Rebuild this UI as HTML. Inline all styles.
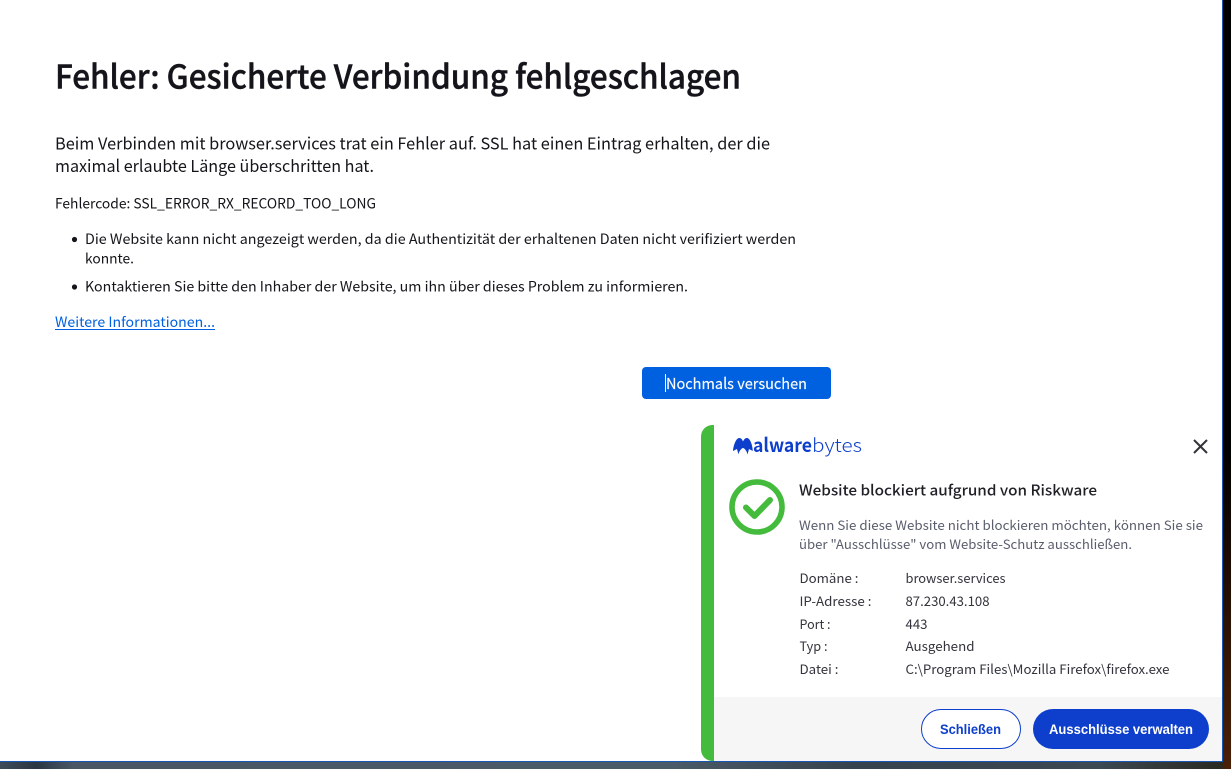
<!DOCTYPE html>
<html lang="de">
<head>
<meta charset="utf-8">
<title>Fehler: Gesicherte Verbindung fehlgeschlagen</title>
<style>
html,body{margin:0;padding:0;width:1231px;height:769px;overflow:hidden;background:#000}
svg{display:block;position:absolute;left:0;top:0}
text{font-family:"Noto Sans CJK JP","Liberation Sans",sans-serif;white-space:pre}
.b{font-family:"Liberation Sans",sans-serif}
</style>
</head>
<body>
<svg width="1231" height="769" viewBox="0 0 1231 769" xmlns="http://www.w3.org/2000/svg">
<defs>
<linearGradient id="strip" x1="0" y1="0" x2="0" y2="1">
<stop offset="0" stop-color="#000"/>
<stop offset=".58" stop-color="#000"/>
<stop offset=".72" stop-color="#1a0a02"/>
<stop offset=".9" stop-color="#3c1a06"/>
<stop offset="1" stop-color="#4a2008"/>
</linearGradient>
<linearGradient id="desk" x1="0" y1="0" x2="1" y2="0">
<stop offset="0" stop-color="#3f4d5a"/>
<stop offset=".03" stop-color="#2c3642"/>
<stop offset=".06" stop-color="#4a5866"/>
<stop offset=".55" stop-color="#4b5a68"/>
<stop offset=".7" stop-color="#36424d"/>
<stop offset=".9" stop-color="#3c4852"/>
<stop offset="1" stop-color="#2a2a20"/>
</linearGradient>
</defs>
<rect x="0" y="0" width="1231" height="769" fill="#000"/>
<rect x="1223" y="0" width="8" height="769" fill="url(#strip)"/>
<rect x="0" y="762" width="1223" height="7" fill="url(#desk)"/>
<rect x="0" y="0" width="1223" height="762" fill="#1c56b4"/>
<rect x="0" y="0" width="1222" height="761" fill="#fff"/>

<text x="55" y="88.500" font-size="32.5" font-weight="500" fill="#15141a" stroke="#15141a" stroke-width=".45" textLength="686" lengthAdjust="spacingAndGlyphs">Fehler: Gesicherte Verbindung fehlgeschlagen</text>
<text x="55" y="149.500" font-size="16.500" fill="#15141a" textLength="715" lengthAdjust="spacingAndGlyphs">Beim Verbinden mit browser.services trat ein Fehler auf. SSL hat einen Eintrag erhalten, der die</text>
<text x="55" y="172" font-size="16.500" fill="#15141a" textLength="319" lengthAdjust="spacingAndGlyphs">maximal erlaubte Länge überschritten hat.</text>
<text x="55" y="208.500" font-size="14" fill="#15141a" textLength="321" lengthAdjust="spacingAndGlyphs">Fehlercode: SSL_ERROR_RX_RECORD_TOO_LONG</text>
<circle cx="74.500" cy="239.500" r="2.600" fill="#15141a"/>
<text x="85" y="244" font-size="14" fill="#15141a" textLength="711" lengthAdjust="spacingAndGlyphs">Die Website kann nicht angezeigt werden, da die Authentizität der erhaltenen Daten nicht verifiziert werden</text>
<text x="85" y="263.500" font-size="14" fill="#15141a" textLength="49" lengthAdjust="spacingAndGlyphs">konnte.</text>
<circle cx="74.500" cy="287" r="2.600" fill="#15141a"/>
<text x="85" y="291.500" font-size="14" fill="#15141a" textLength="603" lengthAdjust="spacingAndGlyphs">Kontaktieren Sie bitte den Inhaber der Website, um ihn über dieses Problem zu informieren.</text>
<text x="55" y="327" font-size="14" fill="#0061e0" textLength="160" lengthAdjust="spacingAndGlyphs">Weitere Informationen...</text>
<rect x="55" y="329" width="160" height="1" fill="#0061e0"/>

<rect x="642" y="367" width="189" height="32" rx="4" fill="#0061e0"/>
<text x="666" y="389" font-size="15" fill="#fbfbfe" stroke="#fbfbfe" stroke-width=".15" textLength="141" lengthAdjust="spacingAndGlyphs">Nochmals versuchen</text>
<rect x="665" y="374" width="1" height="18" fill="#fff"/>

<!-- Malwarebytes toast -->
<path d="M714 425H713C706 425 701 430 701 437V749C701 756 706 761 713 761H714Z" fill="#44bb3d"/>
<rect x="714" y="697" width="508" height="64" fill="#f6f6f6"/>

<path d="M733 451C733.500 445 736 438.500 739 438C741 437.800 742.300 439.500 743 441.500C743.900 439.500 745.200 437.800 747.200 438C750.200 438.500 752.500 445 752.800 451L749 449L747.500 454.500C747 451.500 745 448.500 743 448C741 448.500 739 451.500 738.500 454.500L737 449Z" fill="#0d3ecc"/>
<text x="753" y="452" font-size="19" font-weight="700" fill="#0d3ecc" textLength="59" lengthAdjust="spacingAndGlyphs">alware</text>
<text x="812" y="452" font-size="19" font-weight="300" fill="#0d3ecc" textLength="50" lengthAdjust="spacingAndGlyphs">bytes</text>

<path d="M1194 440L1207 453M1207 440L1194 453" stroke="#33343a" stroke-width="2" fill="none"/>

<circle cx="757" cy="507" r="25" fill="none" stroke="#44bb3d" stroke-width="5.600"/>
<path d="M746 507.500L754.500 516L770 500" fill="none" stroke="#44bb3d" stroke-width="6" stroke-linecap="round" stroke-linejoin="round"/>

<text x="799" y="495.500" font-size="14.500" font-weight="500" fill="#1f2026" textLength="298" lengthAdjust="spacingAndGlyphs">Website blockiert aufgrund von Riskware</text>
<text x="799" y="530" font-size="13" fill="#5a5d6c" textLength="404" lengthAdjust="spacingAndGlyphs">Wenn Sie diese Website nicht blockieren möchten, können Sie sie</text>
<text x="799" y="549" font-size="13" fill="#5a5d6c" textLength="333" lengthAdjust="spacingAndGlyphs">über "Ausschlüsse" vom Website-Schutz ausschließen.</text>

<g font-size="13" fill="#33343c">
<text x="799.500" y="583" textLength="59" lengthAdjust="spacingAndGlyphs">Domäne :</text>
<text x="905.500" y="583" textLength="100" lengthAdjust="spacingAndGlyphs">browser.services</text>
<text x="799.500" y="606" textLength="72" lengthAdjust="spacingAndGlyphs">IP-Adresse :</text>
<text x="905.500" y="606" textLength="84" lengthAdjust="spacingAndGlyphs">87.230.43.108</text>
<text x="799.500" y="629" textLength="31" lengthAdjust="spacingAndGlyphs">Port :</text>
<text x="905.500" y="629" textLength="22" lengthAdjust="spacingAndGlyphs">443</text>
<text x="799.500" y="651" textLength="28" lengthAdjust="spacingAndGlyphs">Typ :</text>
<text x="905.500" y="651" textLength="69" lengthAdjust="spacingAndGlyphs">Ausgehend</text>
<text x="799.500" y="674" textLength="39" lengthAdjust="spacingAndGlyphs">Datei :</text>
<text x="905.500" y="674" textLength="264" lengthAdjust="spacingAndGlyphs">C:\Program Files\Mozilla Firefox\firefox.exe</text>
</g>

<rect x="921.500" y="709.500" width="99" height="39" rx="19.500" fill="#fff" stroke="#0d3ecc" stroke-width="1"/>
<text x="940" y="734" font-size="13.500" font-weight="700" fill="#0d3ecc" class="b" textLength="61" lengthAdjust="spacingAndGlyphs">Schließen</text>
<rect x="1033" y="709" width="176" height="40" rx="20" fill="#0d3ecc"/>
<text x="1049" y="734" font-size="13.500" font-weight="700" fill="#fff" class="b" textLength="144" lengthAdjust="spacingAndGlyphs">Ausschlüsse verwalten</text>
</svg>
</body>
</html>
